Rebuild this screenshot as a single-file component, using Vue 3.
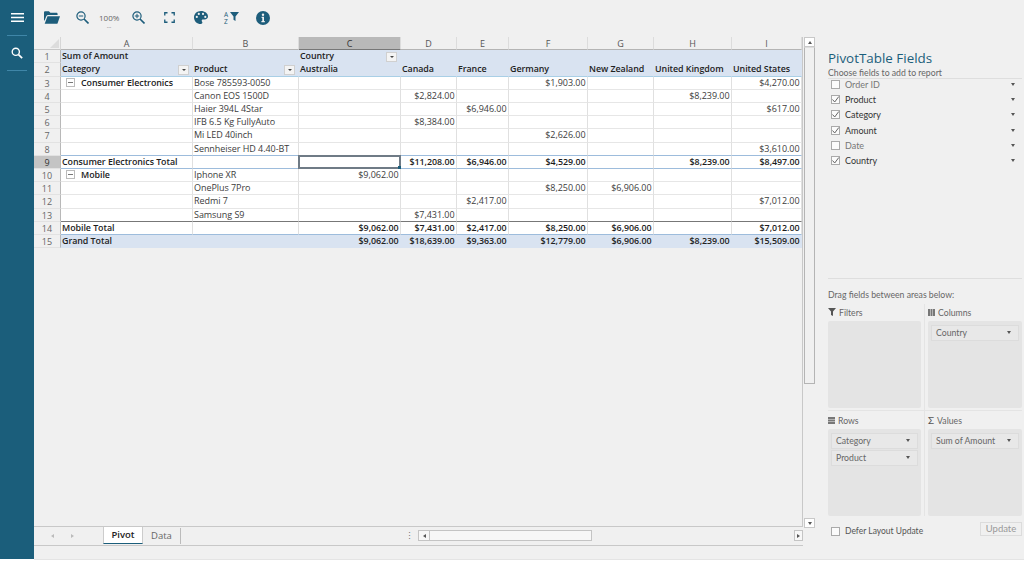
<template>
  <div class="app">
    <aside class="side">
      <button class="side__btn">
        <svg width="13" height="9" viewBox="0 0 13 9"><path d="M0 .8h13M0 4.500h13M0 8.200h13" stroke="#fff" stroke-width="1.5" /></svg>
      </button>
      <div class="side__rule" />
      <button class="side__btn side__btn--search">
        <svg width="12" height="12" viewBox="0 0 14 14" fill="none"><circle cx="5.6" cy="5.6" r="4.2" stroke="#fff" stroke-width="1.6" /><path d="M8.8 8.8 13 13" stroke="#fff" stroke-width="2" /></svg>
      </button>
      <div class="side__rule" />
    </aside>

    <main class="main">
      <!-- Barre d'outils -->
      <header class="tools">
        <svg class="tool tool--open" width="16" height="13" viewBox="0 0 16 13"><path d="M0 1.5C0 .7.6.2 1.3.2h3.6l1.5 1.6h6c.7 0 1.2.5 1.2 1.2v.9H4.2c-.9 0-1.5.4-1.8 1.2L.6 9.6H0z" fill="#1d5d7b" /><path d="M3.5 5.2H16l-2.4 7c-.1.4-.5.6-.9.6H.7z" fill="#1d5d7b" /></svg>
        <svg class="tool tool--zoomout" width="13" height="13" viewBox="0 0 13 13" fill="none"><circle cx="5" cy="5" r="4.1" stroke="#1d5d7b" stroke-width="1.2" /><path d="M8 8l4.5 4.5" stroke="#1d5d7b" stroke-width="1.6" /><path d="M2.8 5h4.4" stroke="#1d5d7b" /></svg>
        <div class="zoomval">100%<span class="zoomval__dots">...</span></div>
        <svg class="tool tool--zoomin" width="13" height="13" viewBox="0 0 13 13" fill="none"><circle cx="5" cy="5" r="4.1" stroke="#1d5d7b" stroke-width="1.2" /><path d="M8 8l4.5 4.5" stroke="#1d5d7b" stroke-width="1.6" /><path d="M2.8 5h4.4M5 2.8v4.4" stroke="#1d5d7b" /></svg>
        <svg class="tool tool--full" width="11" height="11" viewBox="0 0 10 10" fill="none"><path d="M.7 3.2V.7h2.5M6.8.7h2.5v2.5M9.3 6.8v2.5H6.8M3.2 9.3H.7V6.8" stroke="#1d5d7b" stroke-width="1.2" /></svg>
        <svg class="tool tool--palette" width="14" height="13" viewBox="0 0 14 13"><path fill-rule="evenodd" d="M7 0C3 0 0 2.8 0 6.4S3 13 6.8 13c1.1 0 1.6-.7 1.6-1.4 0-.9-.7-1.1-.7-1.9 0-.7.6-1.2 1.3-1.2h1.6C12.600 8.500 14 7.300 14 5.600 14 2.400 10.900 0 7 0zM2.800 7a1.100 1.100 0 1 1 0-2.200 1.100 1.100 0 0 1 0 2.200zm2-3a1.100 1.100 0 1 1 0-2.200 1.100 1.100 0 0 1 0 2.200zm4.200 0a1.100 1.100 0 1 1 0-2.200A1.100 1.100 0 0 1 9 4zm2.300 3a1.100 1.100 0 1 1 0-2.200 1.100 1.100 0 0 1 0 2.200z" fill="#1d5d7b" /></svg>
        <div class="tool tool--sort">
          <span class="sortaz"><span class="sortaz__l">A</span><span class="sortaz__l">Z</span></span>
          <svg class="sortfunnel" width="9" height="9" viewBox="0 0 9 9"><path d="M0 0h9L5.500 4.500V9l-2-1.300V4.500z" fill="#1d5d7b" /></svg>
        </div>
        <svg class="tool tool--info" width="14" height="14" viewBox="0 0 14 14"><circle cx="7" cy="7" r="7" fill="#1d5d7b" /><circle cx="7" cy="3.700" r="1.200" fill="#f0f0f0" /><path d="M5.600 5.800h2.400v4.300h.8v1.100H5.400v-1.100h.9V6.900h-.7z" fill="#f0f0f0" /></svg>
      </header>

      <div class="body">
        <section class="sheet">
          <div class="sheet__top">
            <div class="grid">
              <div class="corner"><span class="corner__tri" /></div>
              <div
                v-for="(c, i) in colNames"
                :key="c"
                class="colhead"
                :class="{ 'colhead--sel': i === 2 }"
              >{{ c }}</div>

              <template v-for="(row, r) in rows" :key="r">
                <div class="rowhead" :class="{ 'rowhead--sel': r === 8 }">{{ r + 1 }}</div>
                <div
                  v-for="(cell, c) in row.cells"
                  :key="c"
                  class="cell"
                  :class="[row.cls, { 'cell--num': c > 1 && r > 1, 'cell--current': r === 8 && c === 2 }]"
                >
                  <span v-if="row.group && c === 0" class="cell__minus" />
                  <span class="cell__txt">{{ cell }}</span>
                  <span v-if="row.filters && row.filters.includes(c)" class="cell__filter" />
                  <span v-if="r === 8 && c === 2" class="cell__handle" />
                </div>
              </template>
            </div>
          </div>

          <!-- Onglets -->
          <footer class="tabs">
            <span class="tabs__nav">
              <i class="tri tri--left" />
              <i class="tri tri--right" />
            </span>
            <span class="tab tab--on">Pivot</span>
            <span class="tab">Data</span>
            <span class="tabs__dots">⋮</span>
            <div class="hscroll">
              <span class="hscroll__btn"><i class="tri tri--left tri--dark" /></span>
              <span class="hscroll__track" />
            </div>
            <span class="hscroll__btn hscroll__btn--end"><i class="tri tri--right tri--dark" /></span>
          </footer>
        </section>

        <div class="vscroll">
          <span class="vscroll__btn"><i class="tri tri--up" /></span>
          <span class="vscroll__thumb" />
          <span class="vscroll__btn vscroll__btn--down"><i class="tri tri--down" /></span>
        </div>

        <!-- Panneau des champs -->
        <aside class="panel">
          <h2 class="panel__title">PivotTable Fields</h2>
          <p class="panel__sub">Choose fields to add to report</p>
          <ul class="fields">
            <li v-for="f in fields" :key="f.name" class="field">
              <span class="check">
                <svg v-if="f.on" width="9" height="9" viewBox="0 0 9 9" fill="none"><path d="M1.500 4.500 3.700 7 7.800 1.500" stroke="#666" /></svg>
              </span>
              <span class="field__name" :class="{ 'field__name--on': f.on }">{{ f.name }}</span>
              <i class="tri tri--down" />
            </li>
          </ul>
          <div class="panel__drag">Drag fields between areas below:</div>
          <div class="areas">
            <div v-for="a in areas" :key="a.name" class="area">
              <div class="area__head">
                <svg v-if="a.name === 'Filters'" width="8" height="8" viewBox="0 0 8 8"><path d="M0 0h8L5 3.500V8L3 7V3.500z" fill="#555" /></svg>
                <svg v-else-if="a.name === 'Columns'" width="7" height="7" viewBox="0 0 7 7"><path d="M0 0h2v7H0zM2.500 0h2v7h-2zM5 0h2v7H5z" fill="#777" /></svg>
                <svg v-else-if="a.name === 'Rows'" width="7" height="7" viewBox="0 0 7 7"><path d="M0 0h7v2H0zM0 2.500h7v2H0zM0 5h7v2H0z" fill="#777" /></svg>
                <span v-else class="area__sigma">Σ</span>
                {{ a.name }}
              </div>
              <div class="area__box">
                <div v-for="chip in a.chips" :key="chip" class="chip">
                  {{ chip }}
                  <i class="tri tri--down" />
                </div>
              </div>
            </div>
          </div>
          <div class="defer">
            <span class="check" />
            <span class="defer__txt">Defer Layout Update</span>
            <span class="defer__btn">Update</span>
          </div>
        </aside>
      </div>
      <div class="status" />
    </main>
  </div>
</template>

<script setup>
const colNames = ['A', 'B', 'C', 'D', 'E', 'F', 'G', 'H', 'I']

function line(a, b, values = {}, extra = {}) {
  const cells = [a, b, '', '', '', '', '', '', '']
  for (const k in values) cells[k] = values[k]
  return { cells, ...extra }
}

const rows = [
  { cells: ['Sum of Amount', '', 'Country', '', '', '', '', '', ''], cls: 'cell--hd cell--hd1', filters: [2] },
  { cells: ['Category', 'Product', 'Australia', 'Canada', 'France', 'Germany', 'New Zealand', 'United Kingdom', 'United States'], cls: 'cell--hd cell--hd2', filters: [0, 1] },
  line('Consumer Electronics', 'Bose 785593-0050', { 5: '$1,903.00', 8: '$4,270.00' }, { group: true, cls: 'cell--grp' }),
  line('', 'Canon EOS 1500D', { 3: '$2,824.00', 7: '$8,239.00' }),
  line('', 'Haier 394L 4Star', { 4: '$6,946.00', 8: '$617.00' }),
  line('', 'IFB 6.5 Kg FullyAuto', { 3: '$8,384.00' }),
  line('', 'Mi LED 40inch', { 5: '$2,626.00' }),
  line('', 'Sennheiser HD 4.40-BT', { 8: '$3,610.00' }),
  line('Consumer Electronics Total', '', { 3: '$11,208.00', 4: '$6,946.00', 5: '$4,529.00', 7: '$8,239.00', 8: '$8,497.00' }, { cls: 'cell--total' }),
  line('Mobile', 'Iphone XR', { 2: '$9,062.00' }, { group: true, cls: 'cell--grp' }),
  line('', 'OnePlus 7Pro', { 5: '$8,250.00', 6: '$6,906.00' }),
  line('', 'Redmi 7', { 4: '$2,417.00', 8: '$7,012.00' }),
  line('', 'Samsung S9', { 3: '$7,431.00' }),
  line('Mobile Total', '', { 2: '$9,062.00', 3: '$7,431.00', 4: '$2,417.00', 5: '$8,250.00', 6: '$6,906.00', 8: '$7,012.00' }, { cls: 'cell--total cell--total2' }),
  line('Grand Total', '', { 2: '$9,062.00', 3: '$18,639.00', 4: '$9,363.00', 5: '$12,779.00', 6: '$6,906.00', 7: '$8,239.00', 8: '$15,509.00' }, { cls: 'cell--grand' }),
]

const fields = [
  { name: 'Order ID', on: false },
  { name: 'Product', on: true },
  { name: 'Category', on: true },
  { name: 'Amount', on: true },
  { name: 'Date', on: false },
  { name: 'Country', on: true },
]

const areas = [
  { name: 'Filters', chips: [] },
  { name: 'Columns', chips: ['Country'] },
  { name: 'Rows', chips: ['Category', 'Product'] },
  { name: 'Values', chips: ['Sum of Amount'] },
]
</script>

<style>
html, body { margin: 0; background: #fff; }
</style>

<style scoped>
.app {
  display: flex;
  width: 1024px;
  height: 561px;
  overflow: hidden;
  font-family: 'Open Sans', 'Noto Sans', sans-serif;
  font-size: 9px;
  color: #333;
}

/* Sidebar */
.side {
  width: 34px;
  height: 559px;
  flex: none;
  background: #1b5e7b;
  display: flex;
  flex-direction: column;
  align-items: center;
}
.side__btn {
  border: 0;
  background: none;
  padding: 0 0 1px;
  height: 35px;
  display: flex;
  align-items: center;
  justify-content: center;
}
.side__btn--search { height: 34px; }
.side__rule {
  width: 20px;
  height: 1px;
  background: #3f86a8;
}

.main {
  flex: 1;
  min-width: 0;
  height: 560px;
  display: flex;
  flex-direction: column;
  background: #f0f0f0;
}

/* Toolbar */
.tools {
  height: 37px;
  flex: none;
  position: relative;
  display: flex;
  align-items: center;
  box-sizing: border-box;
  padding: 0 0 2px 10px;
}
.tool { flex: none; }
.tool--zoomout { margin-left: 16px; }
.zoomval {
  position: relative;
  width: 20px;
  margin-left: 10px;
  text-align: center;
  font-size: 8px;
  line-height: 10px;
  color: #666;
}
.zoomval__dots {
  position: absolute;
  left: 0;
  right: 0;
  top: 10px;
  font-size: 6px;
  line-height: 6px;
}
.tool--zoomin { margin-left: 13px; }
.tool--full { margin-left: 19px; }
.tool--palette { margin-left: 19px; }
.tool--sort {
  margin-left: 16px;
  display: flex;
  align-items: flex-start;
  gap: 0;
}
.sortaz {
  display: flex;
  flex-direction: column;
  font-size: 6.500px;
  line-height: 7px;
  width: 6px;
  color: #1d5d7b;
}
.sortaz__l { height: 7px; }
.sortfunnel { margin-top: 1px; }
.tool--info { margin-left: 17px; }

.body {
  flex: 1;
  min-height: 0;
  display: flex;
}

/* Feuille */
.sheet {
  width: 769px;
  flex: none;
  display: flex;
  flex-direction: column;
}
.sheet__top {
  flex: 1;
  min-height: 0;
  background: #f0f0f0;
  border-bottom: 1px solid #c8c8c8;
  border-right: 1px solid #c8c8c8;
}
.grid {
  display: grid;
  grid-template-columns: 27px 132px 106px 102px 56px 52px 79px 66px 78px 70px;
  grid-template-rows: 13.300px repeat(15, 13.200px);
}
.corner {
  background: #f0f0f0;
  border-bottom: 1px solid #c6c6c6;
  border-right: 1px solid #d6d6d6;
  position: relative;
}
.corner__tri {
  position: absolute;
  right: 1px;
  bottom: 1px;
  border-left: 9px solid transparent;
  border-bottom: 9px solid #dcdcdc;
}
.colhead {
  background: #f0f0f0;
  border-right: 1px solid #dcdcdc;
  border-bottom: 1px solid #b4b4b4;
  text-align: center;
  line-height: 13px;
  font-size: 9px;
  color: #555;
}
.colhead--sel {
  background: #b9b9b9;
  color: #333;
  border-bottom-color: #777;
}
.rowhead {
  background: #f0f0f0;
  border-right: 1px solid #b8b8b8;
  border-bottom: 1px solid #e2e2e2;
  text-align: center;
  line-height: 13px;
  font-size: 9px;
  color: #666;
}
.rowhead--sel {
  background: #c4c4c4;
  color: #333;
}
.cell {
  position: relative;
  box-sizing: border-box;
  background: #fff;
  border-right: 1px solid #e0e0e0;
  border-bottom: 1px solid #e6e6e6;
  padding: 0 1px;
  line-height: 12.200px;
  white-space: nowrap;
  color: #3c3c3c;
  letter-spacing: -0.05px;
}
.cell--num { text-align: right; padding-right: 1.500px; }
.cell--hd {
  background: #d9e3f1;
  border-color: #d9e3f1;
  font-weight: 600;
  color: #222;
  font-size: 8.900px;
}
.cell--hd2 { border-bottom-color: #a9cfe6; }
.cell--grp:nth-child(n) { color: #3c3c3c; }
.cell--grp .cell__minus + .cell__txt { font-weight: 600; color: #222; margin-left: 6px; font-size: 8.900px; }
.cell--total {
  font-weight: 600;
  font-size: 8.900px;
  color: #1c1c1c;
  border-top: 1px solid #9dbcdc;
  border-bottom: 1px solid #9dbcdc;
  margin-top: -1px;
  line-height: 12.200px;
}
.cell--total2 { border-top-color: #777; }
.cell--grand {
  background: #d9e3f1;
  border-color: #d9e3f1;
  font-weight: 600;
  font-size: 8.900px;
  color: #222;
}
.cell--current {
  border: 2px solid #6f7b86;
  margin-left: -1px;
}
.cell__handle {
  position: absolute;
  right: -3px;
  bottom: -3px;
  width: 4px;
  height: 4px;
  background: #1b5e7b;
  border: 0;
}
.cell__minus {
  display: inline-block;
  vertical-align: -1px;
  width: 7px;
  height: 7px;
  margin-left: 4px;
  border: 1px solid #bbb;
  background: linear-gradient(#777, #777) center / 5px 1px no-repeat;
}
.cell__filter {
  position: absolute;
  right: 3px;
  top: 2px;
  width: 9px;
  height: 8px;
  background: #f4f4f4;
  border: 1px solid #d0d0d0;
}
.cell__filter::after {
  content: '';
  position: absolute;
  left: 2.500px;
  top: 3px;
  border-left: 2px solid transparent;
  border-right: 2px solid transparent;
  border-top: 2px solid #444;
}

/* Triangles */
.tri {
  display: inline-block;
  width: 0;
  height: 0;
  border: 2.500px solid transparent;
}
.tri--down { border-top: 3px solid #555; border-bottom: 0; }
.tri--up { border-bottom: 3px solid #555; border-top: 0; }
.tri--left { border-right: 3px solid #bbb; border-left: 0; }
.tri--right { border-left: 3px solid #bbb; border-right: 0; }
.tri--dark.tri--left { border-right-color: #555; }
.tri--dark.tri--right { border-left-color: #555; }

/* Onglets */
.tabs {
  height: 18px;
  flex: none;
  display: flex;
  align-items: stretch;
  position: relative;
  border-bottom: 1px solid #c8c8c8;
}
.tabs__nav {
  width: 69px;
  display: flex;
  align-items: center;
  gap: 17px;
  padding-left: 17px;
  box-sizing: border-box;
}
.tab {
  padding: 0 9px;
  line-height: 16px;
  height: 16px;
  color: #666;
  font-size: 9.500px;
  border-right: 1px solid #bbb;
  box-sizing: border-box;
}
.tab--on {
  width: 40px;
  padding: 0;
  text-align: center;
  color: #222;
  font-weight: 600;
  background: #fff;
  height: 17px;
  border-left: 1px solid #ccc;
  border-right: 1px solid #ccc;
  border-bottom: 1.500px solid #1b5e7b;
}
.tab:not(.tab--on) {
  height: 16px;
  margin-top: 1px;
  width: 38px;
  padding: 0 0 0 8px;
}
.tabs__dots {
  margin-left: auto;
  margin-right: 4px;
  line-height: 18px;
  color: #777;
  font-size: 9px;
}
.hscroll {
  width: 174px;
  height: 11px;
  margin: 3px 0 0 0;
  box-sizing: border-box;
  display: flex;
  background: #f7f7f7;
  border: 1px solid #c4c4c4;
  margin-right: 211px;
}
.hscroll__btn {
  width: 10px;
  flex: none;
  display: flex;
  align-items: center;
  justify-content: center;
  border-right: 1px solid #c4c4c4;
  background: #f7f7f7;
}
.hscroll__btn--end {
  position: absolute;
  right: 0;
  top: 3px;
  height: 11px;
  box-sizing: border-box;
  border: 1px solid #c4c4c4;
  width: 9px;
}
.hscroll__track { flex: 1; }

/* Ascenseur vertical */
.vscroll {
  width: 13px;
  flex: none;
  display: flex;
  flex-direction: column;
  align-items: center;
  box-sizing: border-box;
  padding-bottom: 18px;
}
.vscroll__btn {
  width: 11px;
  height: 10px;
  box-sizing: border-box;
  background: #fff;
  border: 1px solid #c8c8c8;
  display: flex;
  align-items: center;
  justify-content: center;
  flex: none;
}
.vscroll__thumb {
  width: 11px;
  height: 337px;
  box-sizing: border-box;
  border: 1px solid #b4b4b4;
  border-top-color: #ddd;
  flex: none;
}
.vscroll__btn--down { margin-top: auto; }

/* Panneau */
.panel {
  flex: 1;
  min-width: 0;
  box-sizing: border-box;
  padding: 12px 2px 0 12px;
  display: flex;
  flex-direction: column;
  font-family: 'Lato', 'Open Sans', sans-serif;
}
.panel__title {
  margin: 0;
  font-family: 'Open Sans', sans-serif;
  font-size: 13.400px;
  line-height: 18px;
  font-weight: 400;
  color: #1b5e7b;
}
.panel__sub {
  margin: 0;
  font-size: 8.700px;
  line-height: 11px;
  color: #666;
  padding-bottom: 0;
  border-bottom: 1px solid #dedede;
}
.fields {
  list-style: none;
  margin: -2.300px 0 0;
  padding: 0;
  height: 202.300px;
  border-bottom: 1px solid #dedede;
  box-sizing: border-box;
}
.field {
  display: flex;
  align-items: center;
  height: 15.300px;
  padding: 0 7px 0 3px;
  font-size: 9px;
}
.field .tri { margin-left: auto; }
.check {
  width: 9px;
  height: 9px;
  box-sizing: border-box;
  border: 1px solid #aaa;
  background: #fbfbfb;
  display: inline-flex;
  flex: none;
  align-items: center;
  justify-content: center;
}
.check svg { margin: -1px; flex: none; }
.field__name {
  margin-left: 5px;
  color: #777;
}
.field__name--on { color: #333; }
.panel__drag {
  margin-top: 10px;
  line-height: 12px;
  font-size: 8.700px;
  color: #666;
}
.areas {
  margin-top: 2.500px;
  display: grid;
  grid-template-columns: 97px 97px;
  grid-template-rows: 107px 105px;
}
.area {
  display: flex;
  flex-direction: column;
  padding-right: 3px;
  border-right: 1px solid #e4e4e4;
  border-bottom: 1px solid #e4e4e4;
  box-sizing: border-box;
}
.area:nth-child(even) {
  border-right: 0;
  padding: 0 0 0 3px;
}
.area:nth-child(n + 3) {
  border-bottom: 0;
  padding-top: 1px;
}
.area__head {
  height: 17px;
  flex: none;
  display: flex;
  align-items: center;
  gap: 3px;
  font-size: 8.700px;
  color: #666;
}
.area__sigma { font-size: 10px; color: #555; line-height: 1; }
.area__box {
  height: 87px;
  box-sizing: border-box;
  background: #e4e4e4;
  border-radius: 2px;
  padding: 4px 3px;
}
.chip {
  height: 16px;
  margin-bottom: 1px;
  box-sizing: border-box;
  border: 1px solid #dcdcdc;
  background: #e8e8e8;
  padding: 0 7px 0 4px;
  display: flex;
  align-items: center;
  justify-content: space-between;
  font-size: 8.700px;
  color: #666;
}
.defer {
  display: flex;
  align-items: center;
  margin-top: 9px;
  padding-left: 3px;
  height: 13px;
}
.defer__txt {
  margin-left: 5px;
  font-size: 8.500px;
  color: #555;
}
.defer__btn {
  margin-left: auto;
  margin-top: -4px;
  width: 42px;
  height: 14px;
  line-height: 12px;
  text-align: center;
  box-sizing: border-box;
  border: 1px solid #dcdcdc;
  color: #999;
  font-size: 9.500px;
}

.status { height: 13px; flex: none; border-bottom: 1px solid #e4e4e4; }
</style>
